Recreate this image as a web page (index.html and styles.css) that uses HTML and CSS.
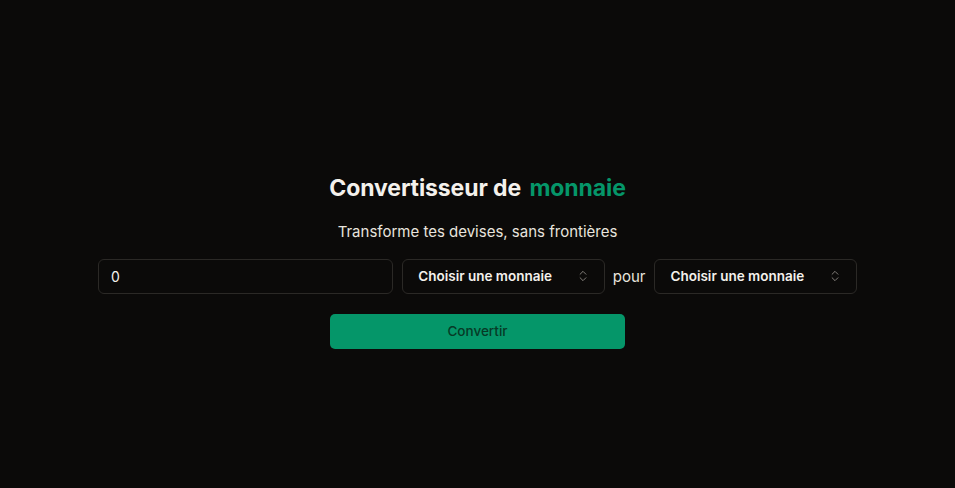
FILE: index.html
```html
<!DOCTYPE html>
<html>
<head>
    <title>Convertisseur de monnaie</title>
    <link rel="stylesheet" href="styles.css">
</head>
<body>
    <main class="page">
        <h1 class="title">Convertisseur de <span class="accent">monnaie</span></h1>
        <p class="subtitle">Transforme tes devises, sans frontières</p>

        <!-- Conversion form -->
        <div class="row">
            <input class="amount" type="text" value="0">
            <div class="select">
                <span>Choisir une monnaie</span>
                <svg width="14" height="14" viewBox="0 0 24 24" fill="none" stroke="currentColor" stroke-width="1.6" stroke-linecap="round" stroke-linejoin="round"><path d="m7 15 5 5 5-5"/><path d="m7 9 5-5 5 5"/></svg>
            </div>
            <span class="pour">pour</span>
            <div class="select">
                <span>Choisir une monnaie</span>
                <svg width="14" height="14" viewBox="0 0 24 24" fill="none" stroke="currentColor" stroke-width="1.6" stroke-linecap="round" stroke-linejoin="round"><path d="m7 15 5 5 5-5"/><path d="m7 9 5-5 5 5"/></svg>
            </div>
        </div>
        <button class="convert">Convertir</button>
    </main>
</body>
</html>
```

FILE: styles.css
```css
html, body { margin: 0; height: 100%; background: #0b0a09; }
body { font-family: Inter, "Liberation Sans", sans-serif; color: #f4f1ec; }
.page { height: 100%; display: flex; flex-direction: column; align-items: center; justify-content: center; padding-top: 34px; box-sizing: border-box; }
.title { margin: 0; font-size: 23px; font-weight: 700; letter-spacing: -0.1px; }
.accent { color: #059669; margin-left: 3px; }
.subtitle { margin: 20px 0 18px; font-size: 15px; color: #e8e4de; }
.row { display: flex; align-items: center; gap: 8px; width: 759px; }
.amount { width: 296px; height: 35px; box-sizing: border-box; background: #0b0a09; border: 1px solid #2b2926; border-radius: 6px; padding: 0 12px; color: #f4f1ec; font-family: inherit; font-size: 14px; outline: none; margin-right: 1px; }
.select { width: 203px; height: 35px; box-sizing: border-box; border: 1px solid #2b2926; border-radius: 6px; display: flex; align-items: center; justify-content: space-between; padding: 0 14px 0 15px; font-size: 13.5px; font-weight: 600; color: #f4f1ec; }
.select svg { color: #8a8580; }
.pour { font-size: 15px; color: #e8e4de; margin: 0 1px 0 0; }
.convert { margin-top: 20px; width: 295px; height: 35px; border: none; border-radius: 5px; background: #059669; color: #073a26; font-family: inherit; font-size: 13.5px; font-weight: 500; cursor: pointer; }
```
